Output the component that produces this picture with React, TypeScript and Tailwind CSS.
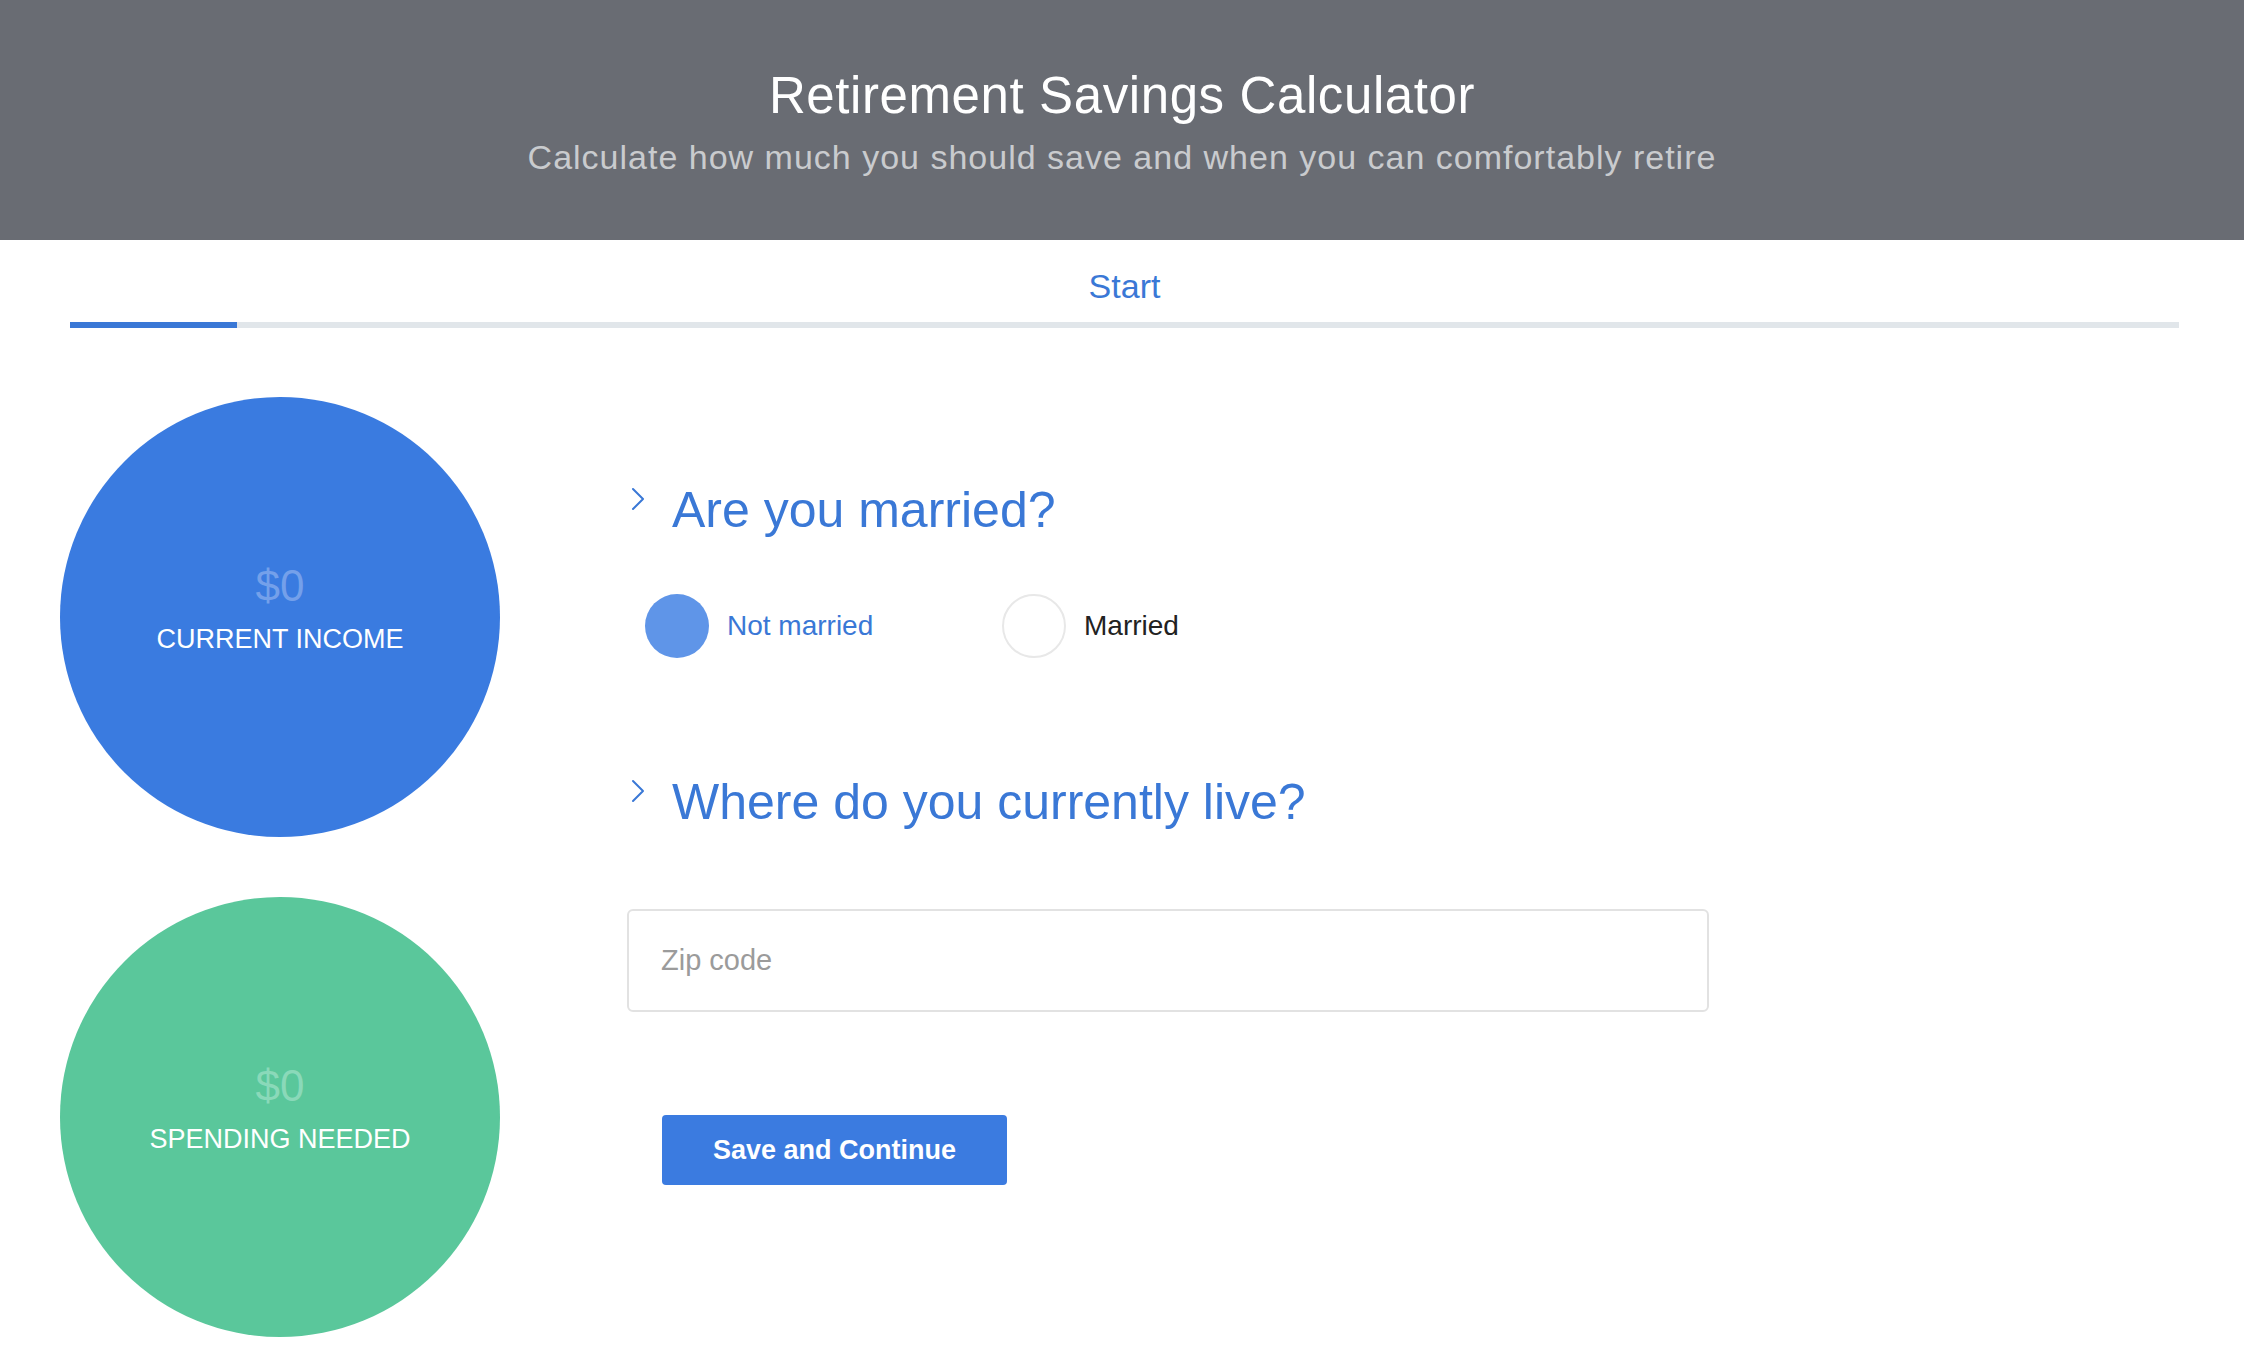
const font = { fontFamily: '"Liberation Sans", Arial, sans-serif' };

const Stat = ({ label, tone }: { label: string; tone: "blue" | "green" }) => (
  <div
    className={
      tone === "blue"
        ? "flex h-[440px] w-[440px] flex-col items-center justify-center rounded-full bg-[#3a7be0] pb-[18px]"
        : "flex h-[440px] w-[440px] flex-col items-center justify-center rounded-full bg-[#5ac79b] pb-[18px]"
    }
  >
    <div
      className={
        tone === "blue"
          ? "text-[44px] leading-none text-[#74a0ea]"
          : "text-[44px] leading-none text-[#8ad9b9]"
      }
    >
      $0
    </div>
    <div className="mt-[18px] text-[27px] leading-none text-white">{label}</div>
  </div>
);

const Chevron = () => (
  <svg
    viewBox="0 0 14 24"
    className="mt-[2px] h-[24px] w-[14px] shrink-0 text-[#3a78d6]"
    fill="none"
    stroke="currentColor"
    strokeWidth={2}
    strokeLinecap="round"
    strokeLinejoin="round"
  >
    <polyline points="2,2 12,12 2,22" />
  </svg>
);

const Question = ({ children }: { children: string }) => (
  <div className="flex items-start pl-[4px]">
    <Chevron />
    <h2 className="ml-[27px] text-[50px] leading-none text-[#3a78d6]">{children}</h2>
  </div>
);

export default function App() {
  return (
    <div className="min-h-screen bg-white" style={font}>
      <header className="flex h-[240px] flex-col items-center bg-[#696c73] pt-[70px]">
        <h1 className="text-[51px] leading-none tracking-[0.6px] text-white">
          Retirement Savings Calculator
        </h1>
        <p className="mt-[19px] text-[34px] leading-none tracking-[1px] text-[#c9cbce]">
          Calculate how much you should save and when you can comfortably retire
        </p>
      </header>

      <div className="pt-[29px] pr-[65px] pl-[70px]">
        <div className="text-center text-[34px] leading-none text-[#3a78d6]">Start</div>
        <div className="mt-[19px] h-[6px] bg-[#e1e6ea]">
          <div className="h-full w-[167px] bg-[#3a78d6]" />
        </div>
      </div>

      <div className="flex pt-[69px] pl-[60px]">
        <div className="flex flex-col gap-[60px]">
          <Stat label="CURRENT INCOME" tone="blue" />
          <Stat label="SPENDING NEEDED" tone="green" />
        </div>

        <div className="ml-[127px] w-[1082px] pt-[88px]">
          <Question>Are you married?</Question>

          <div className="mt-[59px] flex items-center pl-[18px]">
            <label className="flex w-[357px] items-center">
              <span className="h-[64px] w-[64px] rounded-full bg-[#5f95e8]" />
              <span className="ml-[18px] text-[28px] text-[#3a78d6]">Not married</span>
            </label>
            <label className="flex items-center">
              <span className="h-[64px] w-[64px] rounded-full border-2 border-[#e8e8e8] bg-white" />
              <span className="ml-[18px] text-[28px] text-[#222]">Married</span>
            </label>
          </div>

          <div className="mt-[119px]">
            <Question>Where do you currently live?</Question>
          </div>

          <input
            className="mt-[82px] h-[103px] w-full rounded-[6px] border-2 border-[#e2e2e2] px-[32px] text-[29px] text-[#333] placeholder:text-[#9b9b9b] focus:outline-none"
            placeholder="Zip code"
          />

          <button className="mt-[103px] ml-[35px] h-[70px] w-[345px] rounded-[4px] bg-[#3b7be0] text-[27px] font-bold text-white">
            Save and Continue
          </button>
        </div>
      </div>
    </div>
  );
}
